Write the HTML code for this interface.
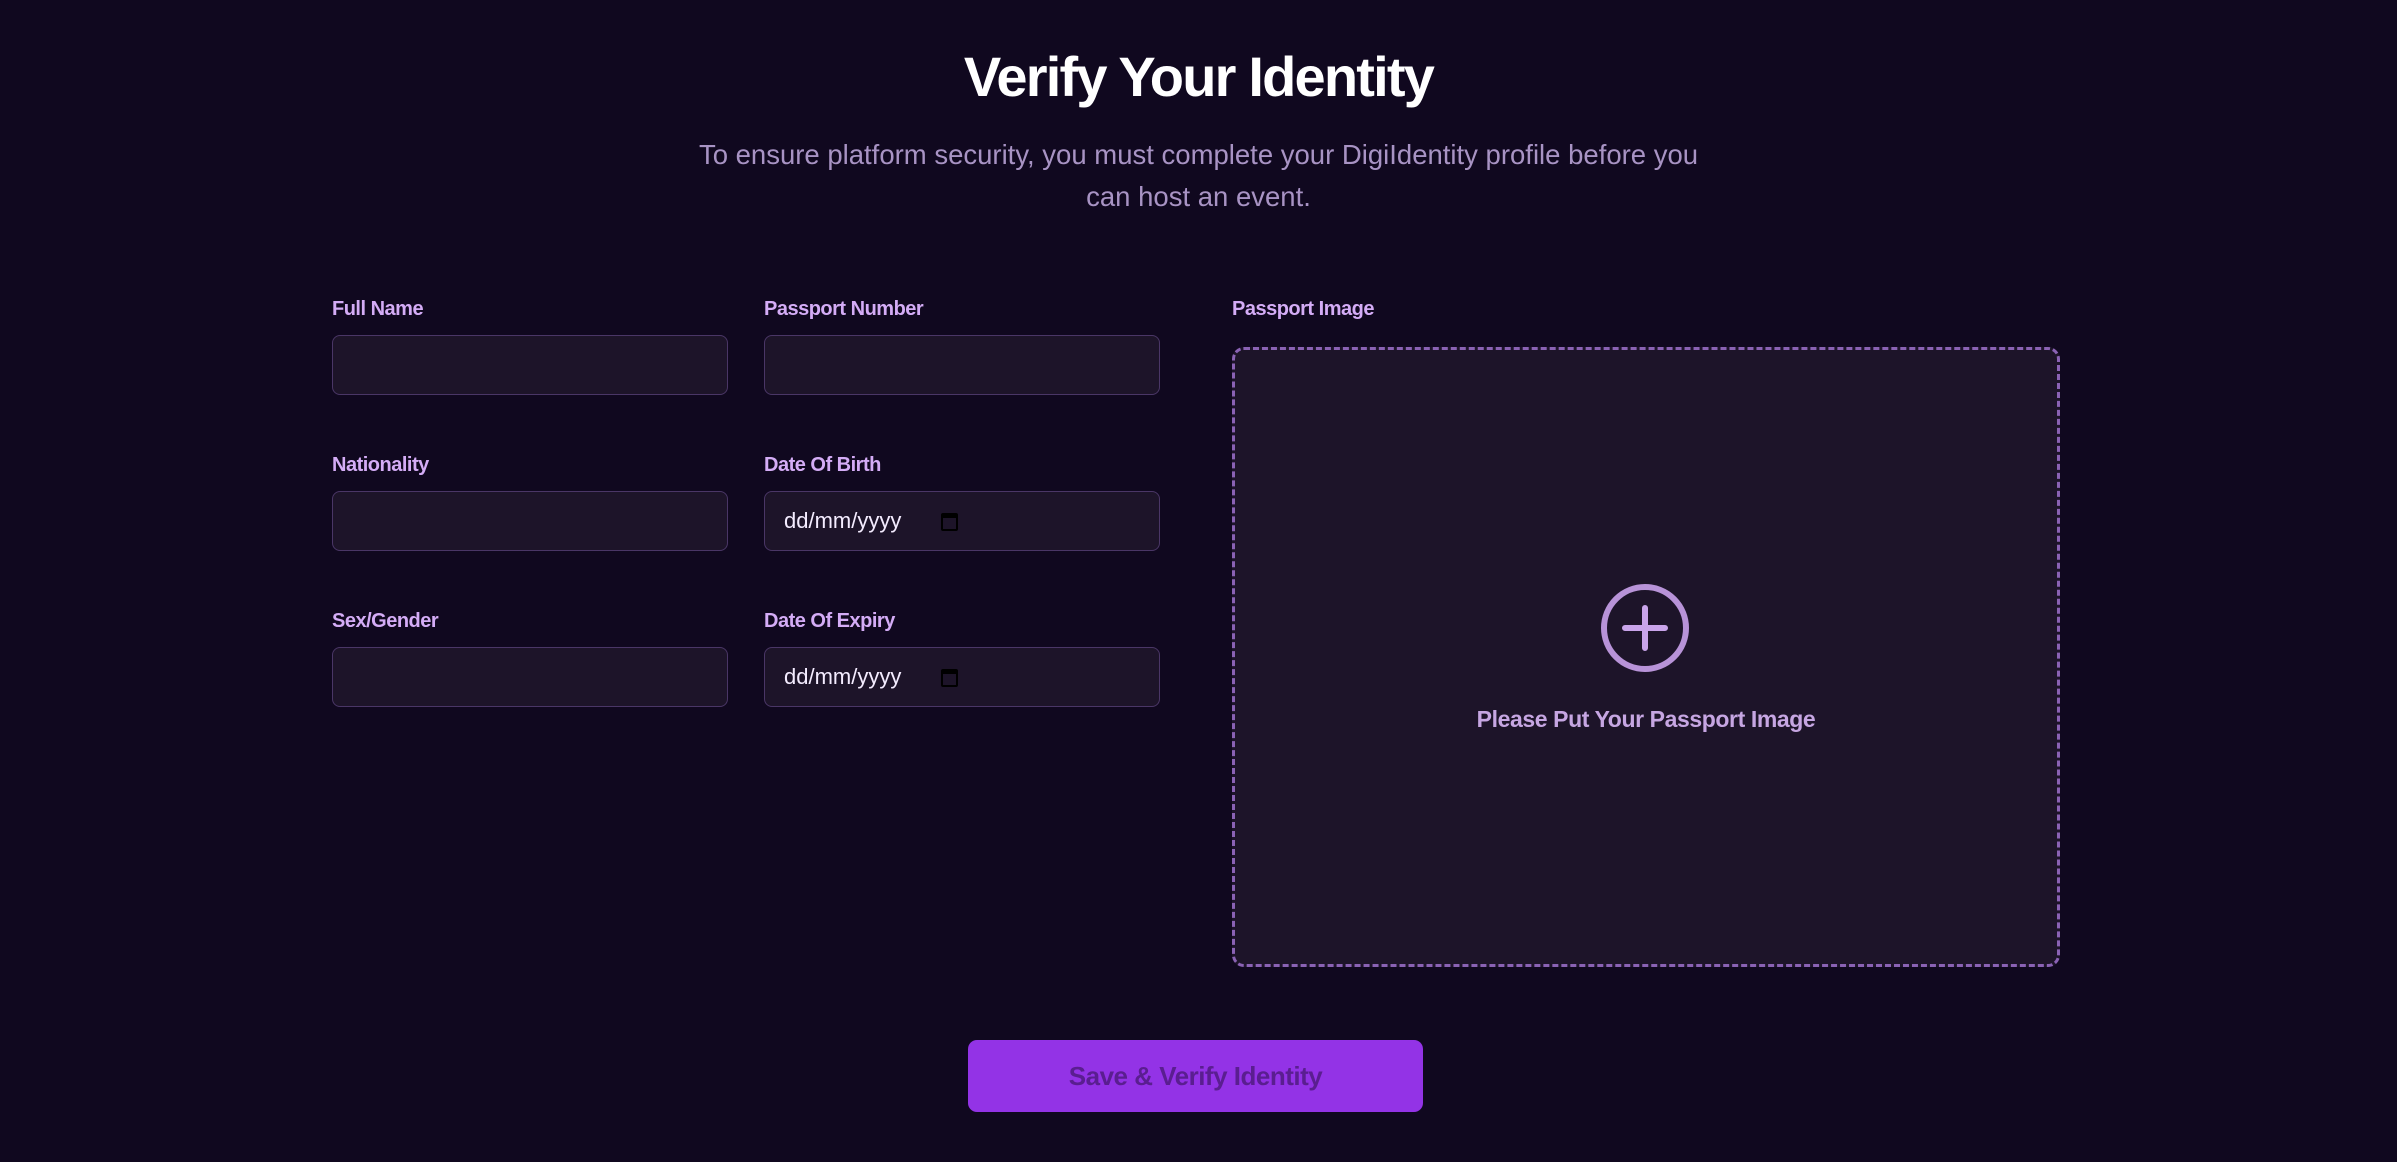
<!DOCTYPE html>
<html><head><style>
*{margin:0;padding:0;box-sizing:border-box}
html,body{width:2397px;height:1162px;background:#10081f;overflow:hidden;font-family:"Liberation Sans",sans-serif}
.abs{position:absolute}
h1{position:absolute;left:0;width:2397px;top:44px;text-align:center;color:#fff;font-size:56px;font-weight:bold;letter-spacing:-1.8px}
.sub{position:absolute;left:0;width:2397px;top:134px;text-align:center;color:#a893c4;font-size:27.5px;line-height:42px;white-space:nowrap}
.lbl{position:absolute;color:#d4acf6;font-size:20px;font-weight:bold;letter-spacing:-0.5px}
.in{position:absolute;width:396px;height:60px;background:#1d1429;border:1.5px solid #4a3666;border-radius:8px}
.date{color:#f4ecff;font-size:22px;padding-left:19px;line-height:57px}
.cal{position:absolute;left:176px;top:21px;width:17px;height:18px;border:2.5px solid #000;border-top-width:5px;border-radius:2px}
.box{position:absolute;left:1232px;top:347px;width:828px;height:620px;background:#1d1429;border:3px dashed #8a62b4;border-radius:12px}
.btn{position:absolute;left:968px;top:1040px;width:455px;height:72px;background:#9333e6;border-radius:9px;color:#5a1e90;font-size:26px;font-weight:bold;text-align:center;line-height:72px;letter-spacing:-0.5px}
</style></head><body>
<h1>Verify Your Identity</h1>
<div class="sub">To ensure platform security, you must complete your DigiIdentity profile before you<br>can host an event.</div>

<div class="lbl" style="left:332px;top:298px">Full Name</div>
<div class="in" style="left:332px;top:335px"></div>
<div class="lbl" style="left:764px;top:298px">Passport Number</div>
<div class="in" style="left:764px;top:335px"></div>

<div class="lbl" style="left:332px;top:454px">Nationality</div>
<div class="in" style="left:332px;top:491px"></div>
<div class="lbl" style="left:764px;top:454px">Date Of Birth</div>
<div class="in date" style="left:764px;top:491px">dd/mm/yyyy<div class="cal"></div></div>

<div class="lbl" style="left:332px;top:610px">Sex/Gender</div>
<div class="in" style="left:332px;top:647px"></div>
<div class="lbl" style="left:764px;top:610px">Date Of Expiry</div>
<div class="in date" style="left:764px;top:647px">dd/mm/yyyy<div class="cal"></div></div>

<div class="lbl" style="left:1232px;top:298px">Passport Image</div>
<div class="box"></div>
<svg class="abs" style="left:1599px;top:582px" width="92" height="92" viewBox="0 0 92 92">
<circle cx="46" cy="46" r="41" fill="none" stroke="#b893d8" stroke-width="6"/>
<path d="M46 26V66M26 46H66" stroke="#c9a4ea" stroke-width="6" stroke-linecap="round"/>
</svg>
<div class="abs" style="left:1232px;width:828px;top:706px;text-align:center;color:#c6a6e2;font-size:23px;font-weight:bold;letter-spacing:-0.4px">Please Put Your Passport Image</div>

<div class="btn">Save &amp; Verify Identity</div>
</body></html>
